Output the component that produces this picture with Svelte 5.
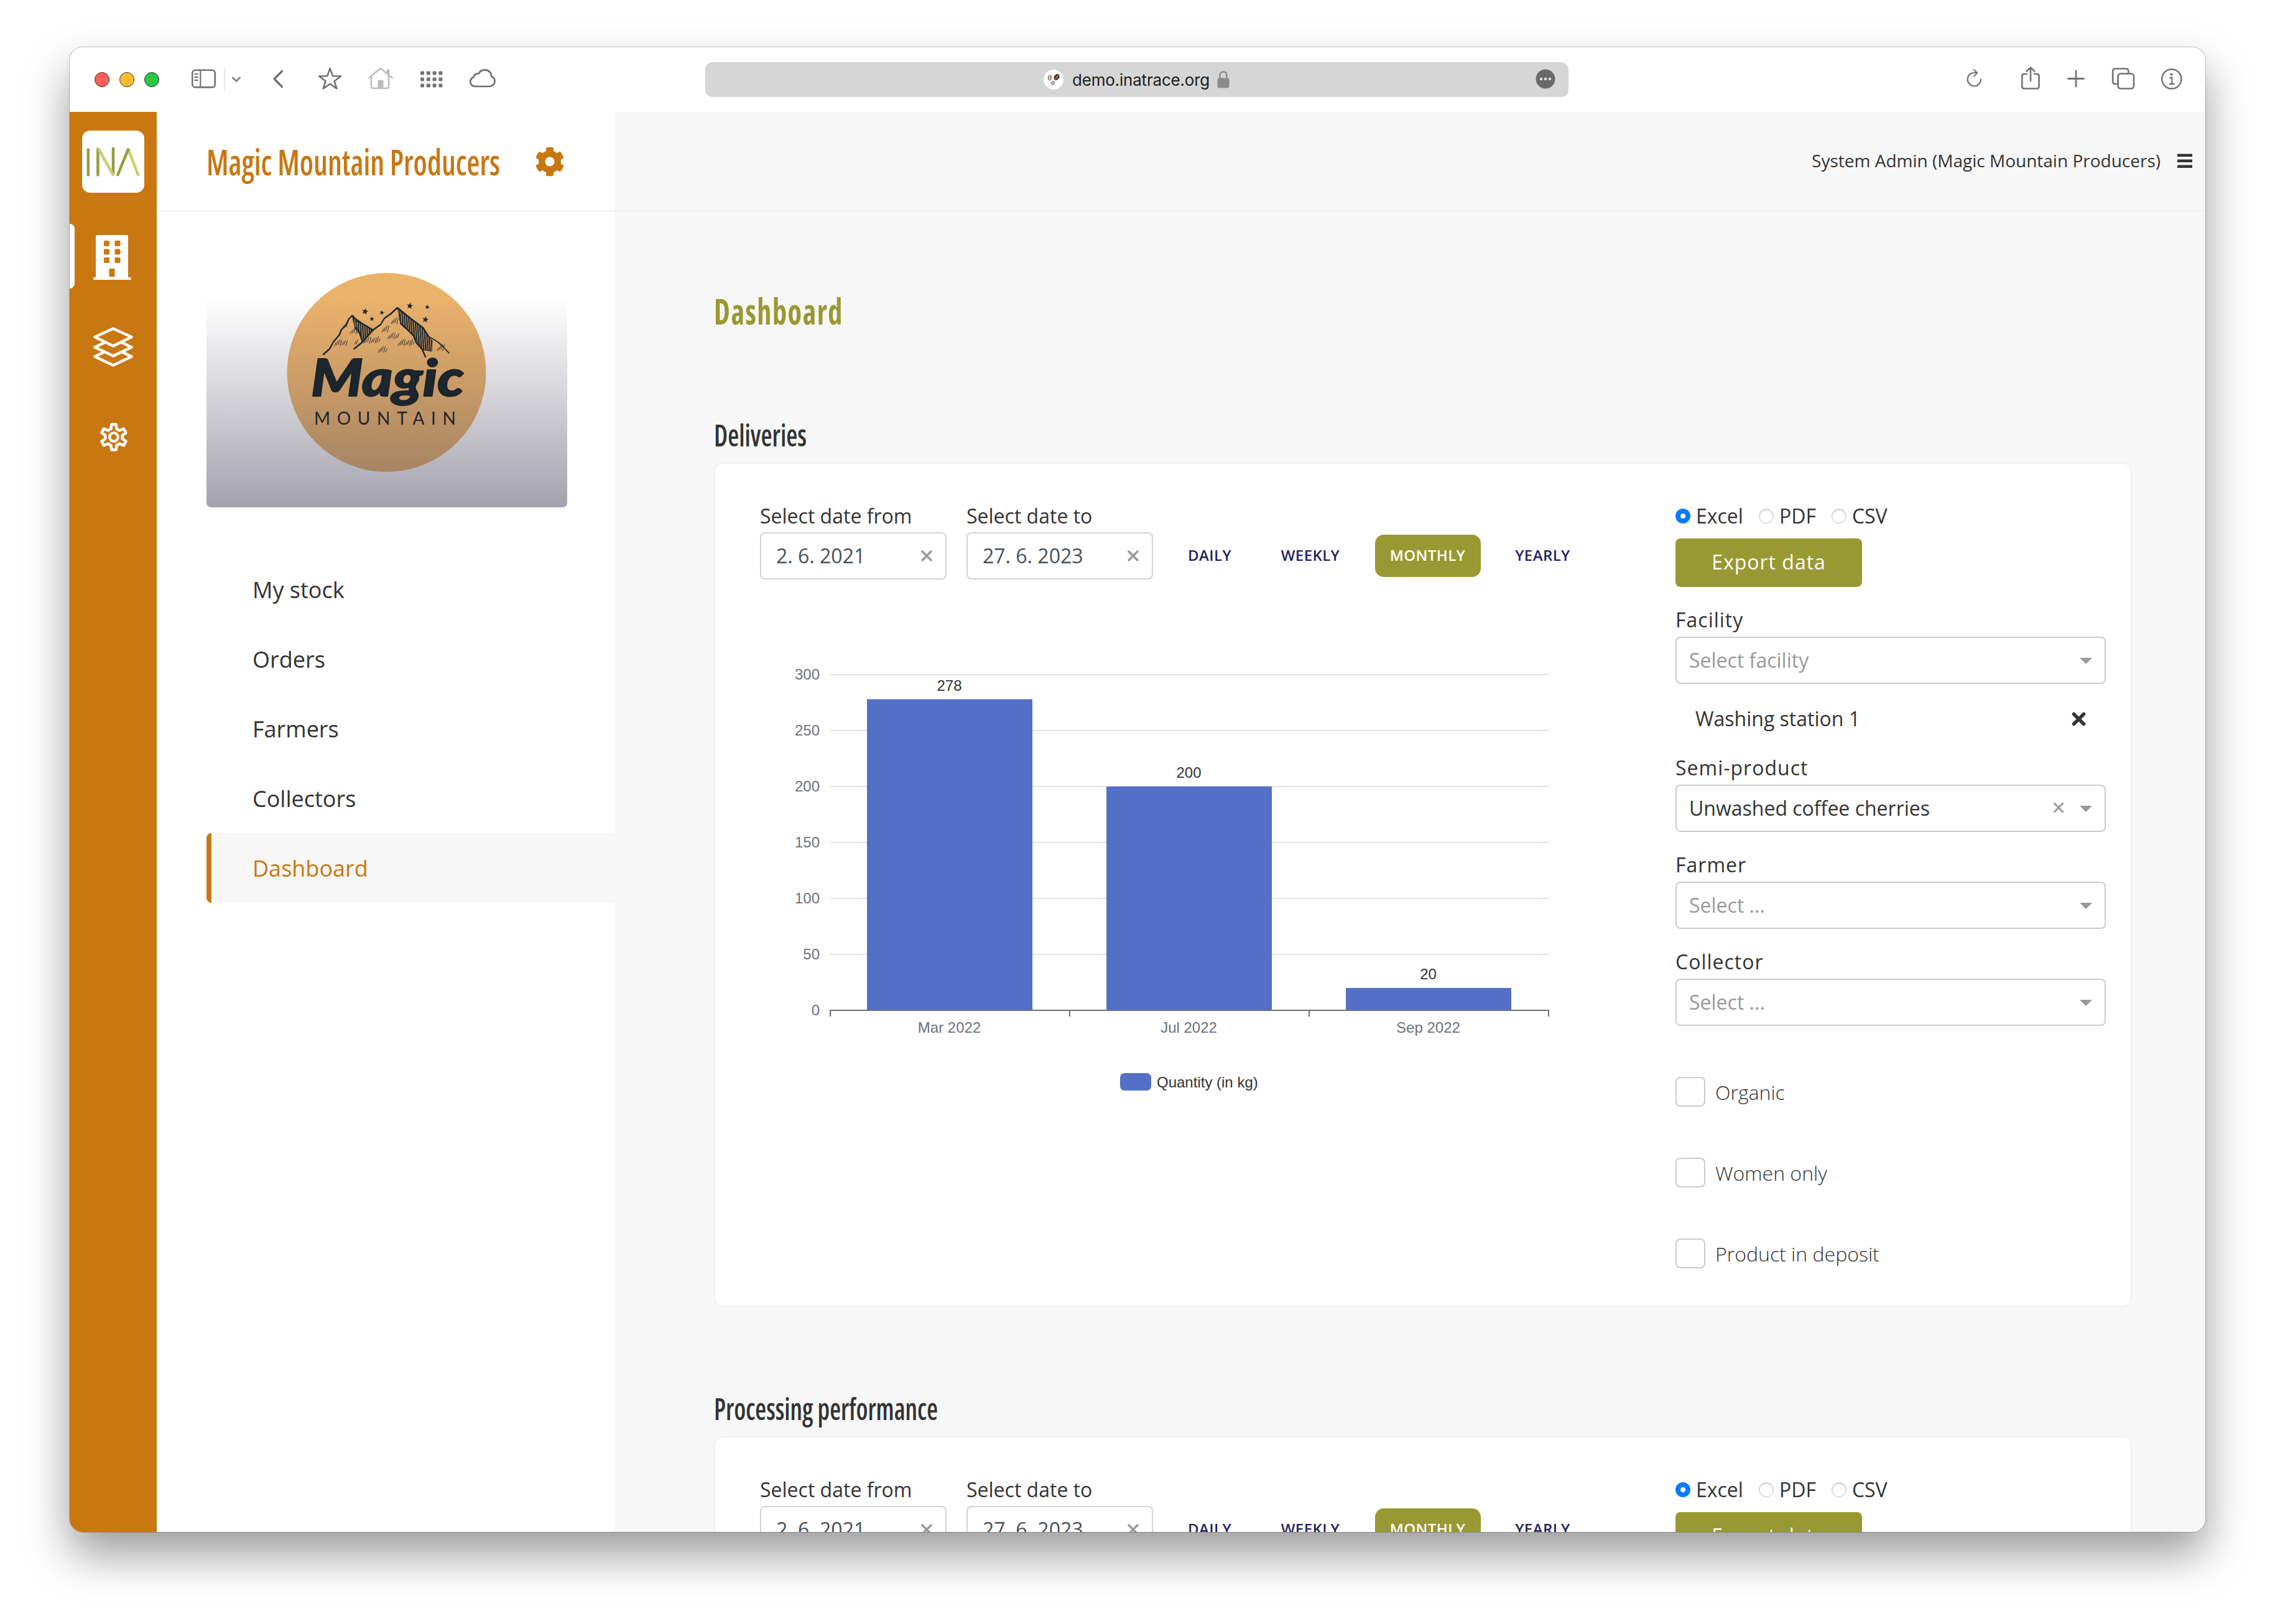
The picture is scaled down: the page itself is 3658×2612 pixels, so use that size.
<script>
  const nav = ['My stock', 'Orders', 'Farmers', 'Collectors', 'Dashboard'];
  const periods = [
    { name: 'DAILY', size: 'w-daily' },
    { name: 'WEEKLY', size: 'w-weekly' },
    { name: 'MONTHLY', size: 'w-monthly' },
    { name: 'YEARLY', size: 'w-yearly' }
  ];
  const formats = ['Excel', 'PDF', 'CSV'];
  const checks = ['Organic', 'Women only', 'Product in deposit'];

  const ticks = [0, 50, 100, 150, 200, 250, 300];
  const bars = [
    { label: 'Mar 2022', value: 278 },
    { label: 'Jul 2022', value: 200 },
    { label: 'Sep 2022', value: 20 }
  ];
  const left = 113;
  const base = 573;
  const band = 385;
  const barWidth = 266;
  const y = (v) => base - v * 1.8;
  const mid = (i) => left - 0.5 + band * (i + 0.5);

  // Six-toothed outline cog around the origin
  const cog = Array.from({ length: 6 }, (_, i) => {
    const at = (r, d) => {
      const a = ((i * 60 + d - 90) * Math.PI) / 180;
      return `${(r * Math.cos(a)).toFixed(2)},${(r * Math.sin(a)).toFixed(2)}`;
    };
    return [at(14, -19), at(20.8, -10), at(20.8, 10), at(14, 19)].join(' ');
  }).join(' ');

  // Short pen strokes on the slopes: x, y, count
  const hatches = [
    [538, 552, 7], [563, 533, 5], [551, 524, 3], [585, 548, 9], [614, 530, 4],
    [624, 541, 6], [629, 517, 4], [640, 552, 9], [608, 563, 5], [703, 560, 4], [570, 550, 2]
  ];
  const stars = [
    [587, 501, 5.5], [614, 503, 4], [598, 513, 4], [659, 492, 5.5], [687, 494, 4], [684, 514, 5.5]
  ];
  const star = ([cx, cy, r]) =>
    Array.from({ length: 10 }, (_, i) => {
      const a = ((i * 36 - 80) * Math.PI) / 180;
      const d = i % 2 ? r * 0.42 : r;
      return `${(cx + d * Math.cos(a)).toFixed(1)},${(cy + d * Math.sin(a)).toFixed(1)}`;
    }).join(' ');
</script>

{#snippet heading(text, length, size, kind)}
  <svg class="heading {kind}" width={length + 20} height={kind === 'section' ? 60 : 80}>
    <text x="0" y={kind === 'section' ? 44 : 60} font-size={size} textLength={length} lengthAdjust="spacingAndGlyphs">{text}</text>
  </svg>
{/snippet}

{#snippet dateField(label, value)}
  <div class="date">
    <span class="label plain">{label}</span>
    <div class="input">
      <span>{value}</span>
      <svg width="20" height="20" viewBox="0 0 20 20"><path d="M2 2L18 18M18 2L2 18" stroke="#999" stroke-width="3.4" /></svg>
    </div>
  </div>
{/snippet}

{#snippet select(label, value, filled)}
  <span class="label">{label}</span>
  <div class="select" class:filled>
    <span>{value}</span>
    {#if filled}
      <svg class="clear" width="18" height="18" viewBox="0 0 18 18"><path d="M1.5 1.5L16.5 16.5M16.5 1.5L1.5 16.5" stroke="#999" stroke-width="3" /></svg>
    {/if}
    <i class="arrow"></i>
  </div>
{/snippet}

{#snippet filters()}
  <div class="dates">
    {@render dateField('Select date from', '2. 6. 2021')}
    {@render dateField('Select date to', '27. 6. 2023')}
    <div class="periods">
      {#each periods as p}
        <button class="{p.size}" class:on={p.name === 'MONTHLY'}>{p.name}</button>
      {/each}
    </div>
  </div>
{/snippet}

{#snippet exporter()}
  <div class="radios">
    {#each formats as f}
      <label><i class="radio" class:checked={f === 'Excel'}></i><span>{f}</span></label>
    {/each}
  </div>
  <button class="export">Export data</button>
{/snippet}

<div class="window">
  <header class="toolbar">
    <div class="lights"><i class="red"></i><i class="amber"></i><i class="green"></i></div>
    <svg class="t-side" width="40" height="44" viewBox="307 106 40 44" fill="none" stroke="#737373" stroke-width="2.6">
      <rect x="309.3" y="112.8" width="36.4" height="27.6" rx="4.5" />
      <path d="M322.3 113V140M312.5 119H319M312.5 124H319M312.5 129H319" stroke-width="2.2" />
    </svg>
    <i class="sep"></i>
    <svg class="t-chev" width="16" height="44" viewBox="372 106 16 44" fill="none" stroke="#86868a" stroke-width="3" stroke-linecap="round"><path d="M374.5 125L380 130.5L385.5 125" /></svg>
    <svg class="t-back" width="20" height="44" viewBox="437 106 20 44" fill="none" stroke="#6f6f6f" stroke-width="3.2" stroke-linecap="round" stroke-linejoin="round"><path d="M453.5 114.5L441 127L453.5 139.5" /></svg>
    <svg class="t-star" width="40" height="44" viewBox="511 106 40 44" fill="none" stroke="#6f6f6f" stroke-width="2.5" stroke-linejoin="round"><path d="M530.6 110L535 122.3L548 122.5L537.6 130.5L541.5 142.5L530.6 135L519.7 142.5L523.6 130.5L513.2 122.5L526.2 122.3Z" /></svg>
    <svg class="t-home" width="42" height="44" viewBox="591 106 42 44" fill="none" stroke="#bdbdbd" stroke-width="2.6" stroke-linecap="round" stroke-linejoin="round">
      <path d="M593.5 125L612 110L630.5 125M597 124V139Q597 142 600 142H622Q625 142 625 139V113H623V119" />
      <rect x="607.5" y="129" width="9" height="13" fill="#bdbdbd" stroke="none" />
    </svg>
    <svg class="t-grid" width="36" height="44" viewBox="676 106 36 44" fill="#737373">
      {#each [0, 1, 2, 3] as c}{#each [0, 1, 2] as r}<rect x={676 + c * 9.8} y={114.5 + r * 10} width="6" height="6" rx="1.5" />{/each}{/each}
    </svg>
    <svg class="t-cloud" width="44" height="44" viewBox="754 106 44 44" fill="none" stroke="#6f6f6f" stroke-width="2.7" stroke-linejoin="round">
      <path d="M764 139H787Q795.5 138 795.5 130.5Q795.5 125 790.5 123Q789 112.5 779.5 112.3Q772.5 112.5 769.7 118.5Q763.5 117.5 761.5 124Q756.2 126.5 756.2 131.5Q757 138.5 764 139Z" />
    </svg>

    <div class="url">
      <svg width="32" height="32" viewBox="0 0 32 32">
        <circle cx="16" cy="16" r="16" fill="#fff" />
        <ellipse cx="10" cy="13" rx="3.3" ry="4.8" transform="rotate(10 10 13)" fill="#9a918c" />
        <path d="M10.5 9Q8.5 13 10 17" stroke="#fff" fill="none" />
        <ellipse cx="21" cy="12" rx="4" ry="5.6" transform="rotate(35 21 12)" fill="#4a2c20" />
        <path d="M23.5 8.5Q21.5 12.5 18.5 15.5" stroke="#fff" fill="none" />
        <ellipse cx="15" cy="21.5" rx="3" ry="3.8" transform="rotate(40 15 21.5)" fill="#a39690" />
        <path d="M17 19.5L13 23.5" stroke="#fff" />
      </svg>
      <span>demo.inatrace.org</span>
      <svg class="lock" width="20" height="30" viewBox="0 0 20 30"><path d="M4.5 14V8.5Q4.5 2.5 10 2.5Q15.5 2.5 15.5 8.5V14" fill="none" stroke="#8c8c8c" stroke-width="2.4" /><rect x="0.5" y="12.5" width="19" height="16" rx="3" fill="#8c8c8c" /></svg>
      <svg class="more" width="32" height="32" viewBox="0 0 32 32"><circle cx="16" cy="16" r="15.5" fill="#6a6a6a" /><circle cx="9" cy="16" r="2.3" fill="#e0e0e0" /><circle cx="16" cy="16" r="2.3" fill="#e0e0e0" /><circle cx="23" cy="16" r="2.3" fill="#e0e0e0" /></svg>
    </div>

    <div class="actions">
      <svg width="26" height="44" viewBox="3162 106 26 44" fill="none" stroke="#737373" stroke-width="2.2" stroke-linecap="round" stroke-linejoin="round"><path d="M3185 127.5A10.7 10.7 0 1 1 3174.3 117H3179M3174 112.5L3179.3 117.3L3174 122.5" /></svg>
      <svg class="a-share" width="32" height="44" viewBox="3249 106 32 44" fill="none" stroke="#737373" stroke-width="2.6" stroke-linecap="round" stroke-linejoin="round"><path d="M3259 119H3254.5Q3251.3 119 3251.3 122V139Q3251.3 142.5 3254.5 142.5H3275Q3278.5 142.5 3278.5 139V122Q3278.5 119 3275 119H3271M3265 130V109M3258.7 114.5L3265 108.5L3271.3 114.5" /></svg>
      <svg class="a-plus" width="30" height="44" viewBox="3323 106 30 44" fill="none" stroke="#737373" stroke-width="2.8" stroke-linecap="round"><path d="M3338 114V139M3325.3 126.5H3350.5" /></svg>
      <svg class="a-tabs" width="38" height="44" viewBox="3395 106 38 44" fill="none" stroke="#737373" stroke-width="2.7"><rect x="3405.5" y="118.5" width="25.5" height="24" rx="4.5" /><path d="M3405 135H3401Q3397.2 135 3397.2 131V114.5Q3397.2 110.5 3401 110.5H3418.5Q3422.3 110.5 3422.3 114.5V118" /></svg>
      <svg class="a-info" width="36" height="44" viewBox="3474 106 36 44" fill="none" stroke="#737373" stroke-width="2.5"><circle cx="3491.8" cy="127" r="15.6" /><circle cx="3491.5" cy="119.8" r="2.1" fill="#737373" stroke="none" /><path d="M3488.5 125H3492.3V135M3488 135H3496.5" stroke-width="2.3" /></svg>
    </div>
  </header>

  <div class="body">
    <aside class="rail">
      <svg class="ina" width="100" height="100" viewBox="132 210 100 100" fill="none" stroke-width="4.6" stroke-linecap="round">
        <rect x="132" y="210" width="100" height="100" rx="13" fill="#fff" />
        <path d="M141.8 240.5V281.5M157.4 239.5V281.5M182 239V280.5" stroke="#989c3e" />
        <path d="M158.5 239.5L181.5 280.5" stroke="#c9cf70" />
        <path d="M206.5 241L222 281" stroke="#c9cf70" />
        <path d="M206 240.5L189.5 281" stroke="#989c3e" />
      </svg>
      <div class="current">
        <svg width="62" height="72" viewBox="150 378 62 72">
          <path fill="#fff" fill-rule="evenodd" d="M157 378H203Q206 378 206 381V446H210.5V450H150V446H154V381Q154 378 157 378ZM167 388.5Q167 387 168.5 387H174.5Q176 387 176 388.5V394.5Q176 396 174.5 396H168.5Q167 396 167 394.5ZM184.5 388.5Q184.5 387 186 387H192Q193.5 387 193.5 388.5V394.5Q193.5 396 192 396H186Q184.5 396 184.5 394.5ZM167 402Q167 400.5 168.5 400.5H174.5Q176 400.5 176 402V408Q176 409.5 174.5 409.5H168.5Q167 409.5 167 408ZM184.5 402Q184.5 400.5 186 400.5H192Q193.5 400.5 193.5 402V408Q193.5 409.5 192 409.5H186Q184.5 409.5 184.5 408ZM167 415.5Q167 414 168.5 414H174.5Q176 414 176 415.5V421.5Q176 423 174.5 423H168.5Q167 423 167 421.5ZM184.5 415.5Q184.5 414 186 414H192Q193.5 414 193.5 415.5V421.5Q193.5 423 192 423H186Q184.5 423 184.5 421.5ZM175.5 433.5Q175.5 432 177 432H183Q184.5 432 184.5 433.5V445H175.5Z" />
        </svg>
      </div>
      <svg class="layers" width="68" height="68" viewBox="148 524 68 68" fill="none" stroke="#fff" stroke-width="4.6" stroke-linejoin="round">
        <path d="M182 528.5L211.5 542L182 556.5L152.5 542Z" />
        <path d="M168 551L152.5 558.5L182 572.5L211.5 558.5L196 551" />
        <path d="M168 566L152.5 573.5L182 587.5L211.5 573.5L196 566" />
      </svg>
      <svg class="cog" width="50" height="50" viewBox="-25 -25 50 50" fill="none" stroke="#fff" stroke-width="4.6" stroke-linejoin="round">
        <polygon points={cog} /><circle r="6.8" stroke-width="4.2" />
      </svg>
    </aside>

    <aside class="sidebar">
      <div class="company">
        {@render heading('Magic Mountain Producers', 472, 57, 'brand')}
        <svg class="gear" width="48" height="48" viewBox="0 0 512 512"><path fill="#c97711" d="M487.4 315.7l-42.6-24.6c4.3-23.2 4.3-47 0-70.2l42.6-24.6c4.9-2.8 7.1-8.6 5.5-14-11.1-35.6-30-67.8-54.7-94.6-3.8-4.1-10-5.1-14.8-2.3L380.8 110c-17.9-15.4-38.5-27.3-60.8-35.1V25.8c0-5.6-3.9-10.5-9.4-11.7-36.7-8.2-74.3-7.8-109.2 0-5.5 1.2-9.4 6.1-9.4 11.7V75c-22.2 7.9-42.8 19.8-60.8 35.1L88.7 85.5c-4.9-2.8-11-1.9-14.8 2.3-24.7 26.7-43.6 58.9-54.7 94.6-1.7 5.4.6 11.2 5.5 14L67.3 221c-4.3 23.2-4.3 47 0 70.2l-42.6 24.6c-4.9 2.8-7.1 8.6-5.5 14 11.1 35.6 30 67.8 54.7 94.6 3.8 4.1 10 5.1 14.8 2.3l42.6-24.6c17.9 15.4 38.5 27.3 60.8 35.1v49.2c0 5.6 3.9 10.5 9.4 11.7 36.7 8.2 74.3 7.8 109.2 0 5.5-1.2 9.4-6.1 9.4-11.7v-49.2c22.2-7.9 42.8-19.8 60.8-35.1l42.6 24.6c4.9 2.8 11 1.9 14.8-2.3 24.7-26.7 43.6-58.9 54.7-94.6 1.5-5.5-.7-11.3-5.6-14.1zM256 336c-44.1 0-80-35.9-80-80s35.9-80 80-80 80 35.9 80 80-35.9 80-80 80z" /></svg>
      </div>

      <svg class="logo" width="580" height="416" viewBox="332 400 580 416">
        <defs>
          <linearGradient id="fade" x1="0" y1="0" x2="0" y2="1">
            <stop offset="0.19" stop-color="#434158" stop-opacity="0" />
            <stop offset="1" stop-color="#434158" stop-opacity="0.49" />
          </linearGradient>
          <pattern id="pen" width="3.4" height="40" patternUnits="userSpaceOnUse" patternTransform="rotate(-4)"><rect width="2.3" height="40" fill="#1d252d" /></pattern>
        </defs>
        <circle cx="621.5" cy="599" r="160" fill="#ebb26b" />
        <path d="M332 400H912V808Q912 816 904 816H340Q332 816 332 808Z" fill="url(#fade)" />
        <g fill="none" stroke="#1d252d" stroke-width="2.4" stroke-linecap="round" stroke-linejoin="round">
          <path fill="url(#pen)" stroke-width="1" d="M566.5 508L583 520L600 531L592 541L583 550L579 535L571 527Z" />
          <path fill="url(#pen)" stroke-width="1" d="M639.5 495L660 512L680 527L688 541L695 548L694 565L678 562L669 545L656 531L644 520Z" />
          <path d="M520 570L530 561L536 550L546 538L549 530L556 523L561 513L566.5 507.5L574 516L587 523L600 531" />
          <path d="M569.5 561L583 550L592 539L602 529L612 522L618 512L628 505L639 495L650 504L664 515L680 527L689 541" />
          <path d="M689 541L704 550L713 558L722 568" stroke-width="1.7" />
          <path d="M644 520L656 531L665 540L670 552L679 562L684 574M571 527L578 535L583 550" />
          <g stroke-width="0.9">
            {#each hatches as [x, yy, n]}
              {#each Array(n) as _, i}
                <path d="M{x + i * 3} {yy + 4 - (i % 3)}l2.4 -{5 + (i % 4) * 1.5}" />
              {/each}
            {/each}
          </g>
        </g>
        {#each stars as s}<polygon points={star(s)} fill="#1d252d" />{/each}
        <text class="magic" x="500" y="637" font-size="82" textLength="246" lengthAdjust="spacingAndGlyphs">Magic</text>
        <text class="mountain" x="505" y="683" font-size="28" textLength="228">MOUNTAIN</text>
      </svg>

      <nav>
        {#each nav as item}<a class:active={item === 'Dashboard'}>{item}</a>{/each}
      </nav>
    </aside>

    <main>
      <div class="userbar">
        <span>System Admin (Magic Mountain Producers)</span>
        <svg width="24" height="24" viewBox="0 0 24 24"><path d="M0 2.8H24M0 11.8H24M0 20.8H24" stroke="#333" stroke-width="4.4" /></svg>
      </div>

      <div class="content">
        {@render heading('Dashboard', 208, 58, 'page')}

        <section>
          {@render heading('Deliveries', 149, 48, 'section')}
          <div class="card">
            <div class="report">
              {@render filters()}
              <svg class="chart" width="1380" height="740" viewBox="0 0 1380 740">
                {#each ticks as t}
                  <path d="M{left} {y(t)}H{left + band * 3}" stroke={t ? '#e0e6f1' : '#6e7079'} stroke-width="2" />
                  <text x="96" y={y(t) + 8} text-anchor="end" class="axis">{t}</text>
                {/each}
                {#each bars as b, i}
                  <rect x={mid(i) - barWidth / 2} y={y(b.value)} width={barWidth} height={b.value * 1.8} fill="#5470c6" />
                  <text x={mid(i) - 0.5} y={y(b.value) - 14} text-anchor="middle">{b.value}</text>
                  <text x={mid(i) - 0.5} y={base + 36} text-anchor="middle" class="axis">{b.label}</text>
                {/each}
                {#each [0, 1, 2, 3] as t}<path d="M{Math.round(left + band * t)} {base}v10" stroke="#6e7079" stroke-width="2" />{/each}
                <path d="M{left - 1} {base}H{left + band * 3 + 1}" stroke="#6e7079" stroke-width="2" />
                <rect x="579" y="674" width="50" height="28" rx="7" fill="#5470c6" />
                <text x="638" y="696.5">Quantity (in kg)</text>
              </svg>
            </div>
            <div class="side">
              {@render exporter()}
              {@render select('Facility', 'Select facility', false)}
              <div class="chosen">
                <span>Washing station 1</span>
                <svg width="23" height="23" viewBox="0 0 23 23"><path d="M3.5 3.5L19.5 19.5M19.5 3.5L3.5 19.5" stroke="#333" stroke-width="5.5" stroke-linecap="round" /></svg>
              </div>
              {@render select('Semi-product', 'Unwashed coffee cherries', true)}
              {@render select('Farmer', 'Select ...', false)}
              {@render select('Collector', 'Select ...', false)}
              <div class="checks">
                {#each checks as c}<label><i class="box"></i><span>{c}</span></label>{/each}
              </div>
            </div>
          </div>
        </section>

        <section>
          {@render heading('Processing performance', 360, 48, 'section')}
          <div class="card">
            <div class="report">{@render filters()}</div>
            <div class="side">{@render exporter()}</div>
          </div>
        </section>
      </div>
    </main>
  </div>
</div>

<style>
  :global(body) { background: #fff; overflow: hidden; }
  * { box-sizing: border-box; }
  svg { display: block; flex: none; }
  i { display: block; flex: none; }
  button { border: 0; padding: 0; font-family: inherit; }

  .window {
    width: 3434px;
    height: 2388px;
    margin: 76px 112px 148px;
    border-radius: 21px;
    overflow: hidden;
    background: #fff;
    color: #333;
    font-family: 'Open Sans', sans-serif;
    display: flex;
    flex-direction: column;
    box-shadow: 0 0 0 1px rgba(0, 0, 0, 0.2), 0 36px 72px rgba(0, 0, 0, 0.4);
  }

  .toolbar { flex: none; height: 104px; display: flex; align-items: center; padding-left: 40px; }
  .lights { display: flex; gap: 16px; }
  .lights i { width: 24px; height: 24px; border-radius: 50%; border: 1px solid; }
  .red { background: #ff5f57; border-color: #e0443e; }
  .amber { background: #febc2e; border-color: #dea123; }
  .green { background: #28c840; border-color: #1aab29; }
  .t-side { margin-left: 51px; }
  .sep { width: 2px; height: 36px; background: #e9e9e9; margin-left: 13px; }
  .t-chev { margin-left: 10px; }
  .t-back { margin-left: 49px; }
  .t-star { margin-left: 54px; }
  .t-home { margin-left: 40px; }
  .t-grid { margin-left: 43px; }
  .t-cloud { margin-left: 42px; }
  .url {
    width: 1388px;
    height: 56px;
    margin-left: 336px;
    border-radius: 12px;
    background: #d6d6d6;
    display: flex;
    align-items: center;
    padding-left: 544px;
    font-family: Inter, sans-serif;
    font-size: 26px;
    letter-spacing: -0.2px;
    color: #1d1d1d;
  }
  .url span { margin-left: 14px; width: 219px; padding-top: 1px; white-space: nowrap; }
  .lock { margin-left: 14px; }
  .more { margin: -3px 0 0 auto; }
  .url .more { margin-right: 21px; }
  .actions { margin-left: 640px; display: flex; }
  .a-share { margin-left: 61px; }
  .a-plus { margin-left: 42px; }
  .a-tabs { margin-left: 42px; }
  .a-info { margin-left: 41px; }

  .body { flex: 1; min-height: 0; display: flex; }
  .rail { width: 140px; flex: none; background: #c97711; display: flex; flex-direction: column; }
  .ina { margin: 30px 0 0 20px; }
  .current { margin-top: 50px; height: 104px; display: flex; align-items: center; }
  .current::before { content: ''; width: 8px; height: 104px; background: #fff; border-radius: 0 8px 8px 0; }
  .current svg { margin: 4px 0 0 30px; }
  .layers { margin: 60px 0 0 36px; }
  .cog { margin: 86px 0 0 46px; }

  .sidebar { width: 736px; flex: none; background: #fff; }
  .company { height: 160px; border-bottom: 2px solid #f1f1f6; display: flex; padding: 42px 0 0 80px; }
  .gear { margin: 14px 0 0 36px; }
  .logo { margin: 60px 0 76px 80px; }
  nav { padding-left: 80px; }
  nav a { display: block; height: 112px; line-height: 113px; padding-left: 74px; font-size: 36px; }
  nav .active { padding-left: 66px; border-left: 8px solid #c97711; border-radius: 8px 0 0 8px; background: #f7f7f7; color: #c97711; }

  .heading { font-family: 'Open Sans', sans-serif; font-stretch: 75%; overflow: visible; }
  .heading text { font-weight: 600; }
  .brand { fill: #c97711; }
  .brand text { font-weight: 550; }
  .page { fill: #999933; }
  .page text { font-weight: 700; letter-spacing: 2px; }
  .section { fill: #333; }

  .magic {
    font-family: Lato, sans-serif;
    font-weight: 900;
    font-style: italic;
    fill: #1d252d;
    stroke: #1d252d;
    stroke-width: 2px;
    stroke-linejoin: round;
  }
  .mountain { font-family: Lato, sans-serif; font-weight: 400; fill: #1d252d; }

  main { flex: 1; background: #f7f7f7; min-width: 0; }
  .userbar { height: 160px; border-bottom: 2px solid #f0f0f5; display: flex; align-items: center; justify-content: flex-end; padding: 0 21px 2px 0; font-size: 28px; }
  .userbar svg { margin: 2px 0 0 27px; }
  .content { padding: 122px 0 0 160px; }
  .content > .page { margin-bottom: 132px; }
  section { height: 1566px; }
  section .section { margin: 0 0 10px; }

  .card {
    width: 2280px;
    height: 1358px;
    border: 2px solid #f0f0f5;
    border-radius: 14px;
    background: #fff;
    display: grid;
    grid-template-columns: 1472px 692px;
    padding: 64px 40px 0 72px;
  }
  .label { display: block; height: 38px; line-height: 39px; font-size: 32px; letter-spacing: 1px; white-space: nowrap; }
  .plain { letter-spacing: 0; }
  .dates { display: flex; gap: 32px; align-items: flex-end; }
  .date { width: 300px; }
  .input {
    margin-top: 8px;
    height: 76px;
    border: 2px solid #ced4da;
    border-radius: 8px;
    display: flex;
    align-items: center;
    justify-content: space-between;
    padding: 0 20px 1px 24px;
    font-size: 32px;
    color: #495057;
  }
  .periods { display: flex; margin: 0 0 4px 1px; }
  .periods button { height: 68px; border-radius: 14px; background: none; color: #24235f; font-size: 24px; font-weight: 600; letter-spacing: 0.4px; padding-bottom: 4px; }
  .periods .on { background: #999933; color: #fff; padding-right: 1px; }
  .w-daily { width: 116px; }
  .w-weekly { width: 142px; margin-left: 33px; }
  .w-monthly { width: 170px; margin-left: 33px; }
  .w-yearly { width: 135px; margin-left: 32px; }

  .chart { margin-top: 120px; font-family: 'Liberation Sans', Arial, sans-serif; font-size: 24px; fill: #333; }
  .axis { fill: #6e7079; }

  .radios { display: flex; height: 38px; align-items: center; font-size: 32px; line-height: 39px; gap: 25px; }
  .radios label { display: flex; align-items: center; }
  .radios span { margin-left: 9px; }
  .radio { width: 24px; height: 24px; border-radius: 50%; margin-top: 2px; border: 1px solid #c4c4c4; background: #fff; box-shadow: inset 0 2px 3px rgba(0, 0, 0, 0.15); }
  .radio.checked { border: 8px solid #0a7aff; box-shadow: none; }
  .export { width: 300px; height: 78px; margin: 18px 0 33px; border-radius: 8px; background: #999933; color: #fff; font-size: 32px; letter-spacing: 1px; padding-bottom: 3px; }

  .select {
    height: 76px;
    margin: 9px 0 33px;
    border: 2px solid #ccc;
    border-radius: 8px;
    display: flex;
    align-items: center;
    padding: 0 20px 2px 20px;
    font-size: 32px;
    color: #999;
  }
  .select.filled { color: #333; }
  .select span { flex: 1; }
  .clear { margin-right: 25px; }
  .arrow { border: 10px solid transparent; border-top-color: #999; border-bottom: 0; margin-top: 3px; }
  .chosen { height: 38px; margin: 37px 32px 40px 32px; display: flex; align-items: center; justify-content: space-between; font-size: 32px; line-height: 38px; }

  .checks { padding-top: 49px; display: flex; flex-direction: column; gap: 82px; }
  .checks label { display: flex; height: 48px; align-items: center; font-size: 32px; font-weight: 300; }
  .checks span { margin: 1px 0 0 16px; }
  .box { width: 48px; height: 48px; border: 2px solid #ccc; border-radius: 8px; }
</style>
